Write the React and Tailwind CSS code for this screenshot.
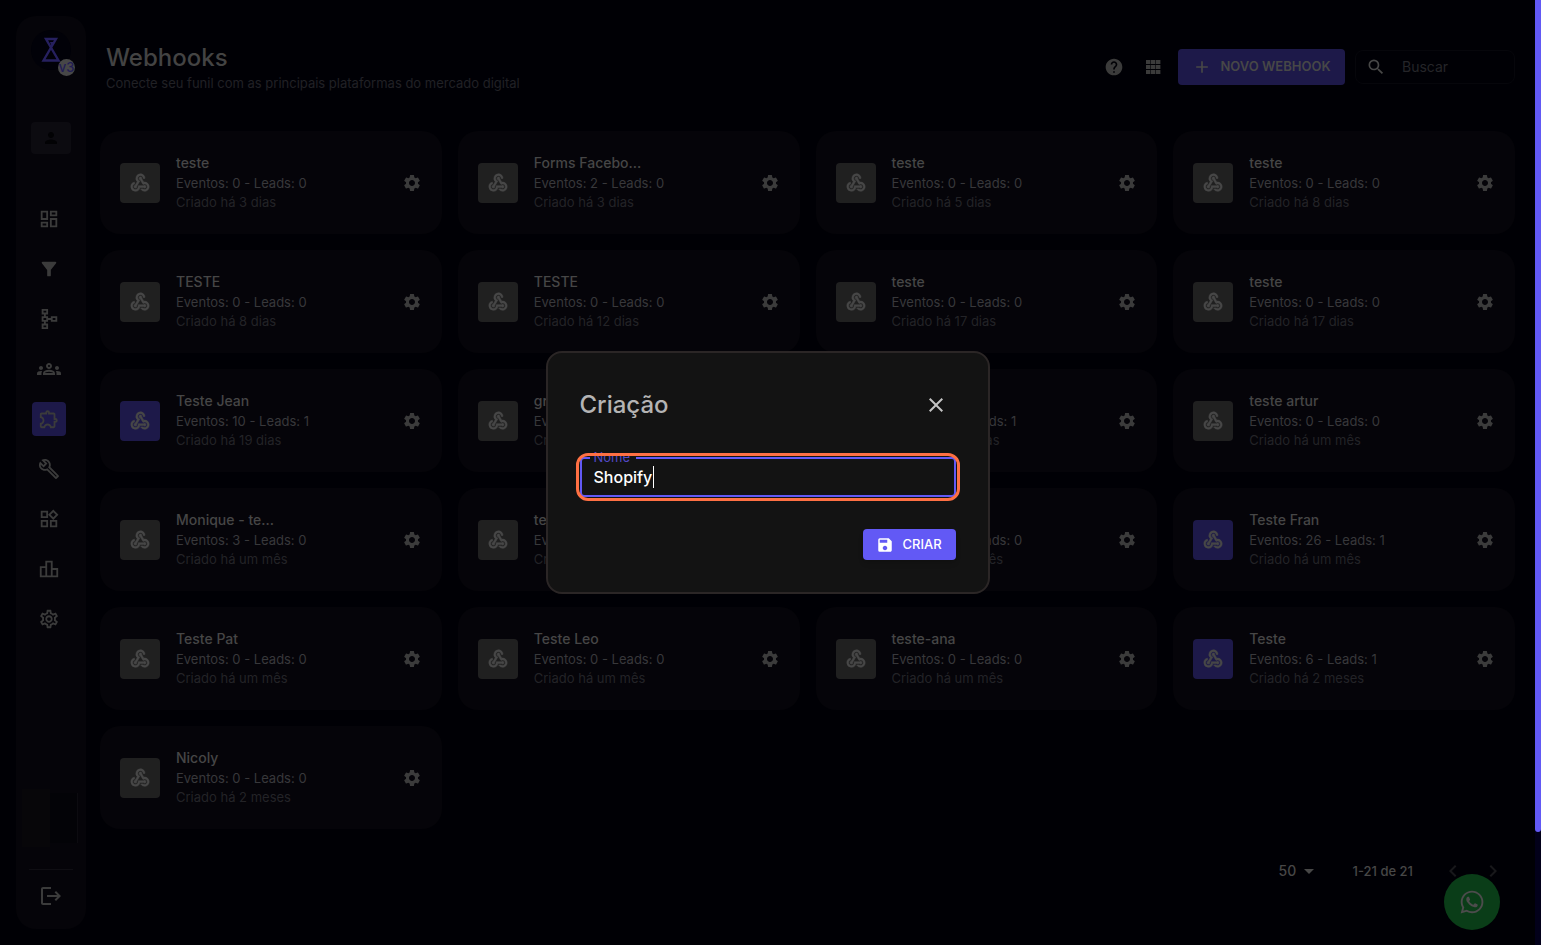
import React, { useState } from "react";
import {
  MdAdd,
  MdArrowDropDown,
  MdChevronLeft,
  MdChevronRight,
  MdClose,
  MdFilterAlt,
  MdHelp,
  MdLogout,
  MdOutlineBuild,
  MdOutlineDashboard,
  MdOutlineExtension,
  MdOutlineGroups,
  MdOutlineLeaderboard,
  MdOutlineSchema,
  MdOutlineSettings,
  MdOutlineWidgets,
  MdPerson,
  MdSave,
  MdSearch,
  MdSettings,
  MdWebhook,
} from "react-icons/md";
import { FaWhatsapp } from "react-icons/fa";

const navItems = [
  { name: "Dashboard", icon: <MdOutlineDashboard size={22} /> },
  { name: "Funis", icon: <MdFilterAlt size={22} /> },
  { name: "Fluxos", icon: <MdOutlineSchema size={22} /> },
  { name: "Leads", icon: <MdOutlineGroups size={24} /> },
  { name: "Webhooks", icon: <MdOutlineExtension size={22} /> },
  { name: "Ferramentas", icon: <MdOutlineBuild size={22} /> },
  { name: "Widgets", icon: <MdOutlineWidgets size={22} /> },
  { name: "Ranking", icon: <MdOutlineLeaderboard size={22} /> },
  { name: "Ajustes", icon: <MdOutlineSettings size={22} /> },
];

const webhooks = [
  { name: "teste", events: 0, leads: 0, created: "3 dias" },
  { name: "Forms Facebo...", events: 2, leads: 0, created: "3 dias" },
  { name: "teste", events: 0, leads: 0, created: "5 dias" },
  { name: "teste", events: 0, leads: 0, created: "8 dias" },
  { name: "TESTE", events: 0, leads: 0, created: "8 dias" },
  { name: "TESTE", events: 0, leads: 0, created: "12 dias" },
  { name: "teste", events: 0, leads: 0, created: "17 dias" },
  { name: "teste", events: 0, leads: 0, created: "17 dias" },
  { name: "Teste Jean", events: 10, leads: 1, created: "19 dias", active: true },
  { name: "grupo", events: 0, leads: 0, created: "20 dias" },
  { name: "teste", events: 1, leads: 1, created: "26 dias" },
  { name: "teste artur", events: 0, leads: 0, created: "um mês" },
  { name: "Monique - te...", events: 3, leads: 0, created: "um mês" },
  { name: "teste", events: 0, leads: 0, created: "um mês" },
  { name: "teste", events: 0, leads: 0, created: "um mês" },
  { name: "Teste Fran", events: 26, leads: 1, created: "um mês", active: true },
  { name: "Teste Pat", events: 0, leads: 0, created: "um mês" },
  { name: "Teste Leo", events: 0, leads: 0, created: "um mês" },
  { name: "teste-ana", events: 0, leads: 0, created: "um mês" },
  { name: "Teste", events: 6, leads: 1, created: "2 meses", active: true },
  { name: "Nicoly", events: 0, leads: 0, created: "2 meses" },
];

const Logo = () => (
  <svg width="20" height="26" viewBox="0 0 20 26" fill="none" stroke="#26205f">
    <path d="M5 2h10L2.5 23.5h15L5 2z" strokeWidth="2.4" />
    <path d="M9 5h3.5L10.5 9z" fill="#26205f" stroke="none" />
  </svg>
);

const GridIcon = () => (
  <svg width="16" height="14" viewBox="0 0 16 14" fill="#3b3b3b">
    {[0, 5, 10].map((y) =>
      [0, 5, 10].map((x) => (
        <rect key={`${x}-${y}`} x={x} y={y} width="4.4" height="4" />
      ))
    )}
  </svg>
);

const Sidebar = () => (
  <aside className="my-4 ml-4 w-[70px] shrink-0 rounded-[20px] bg-[#050409] flex flex-col">
    <div className="relative mx-auto mt-[14px] w-10 h-10 rounded-full bg-[#010108] flex items-center justify-center">
      <Logo />
      <span className="absolute -right-1 -bottom-1.5 w-[17px] h-[17px] rounded-full bg-[#474747] text-[#211c55] text-[13px] leading-none font-medium flex items-center justify-center">
        v3
      </span>
    </div>
    <button
      aria-label="Perfil"
      className="mx-auto mt-[52px] w-10 h-8 rounded bg-[#0c0b10] text-[#020204] flex items-center justify-center"
    >
      <MdPerson size={18} />
    </button>
    <nav className="mt-12 pl-4 flex flex-col gap-4 text-[#3b3b3b]">
      {navItems.map((item) => (
        <a
          key={item.name}
          href="#"
          aria-label={item.name}
          className={`w-[34px] h-[34px] rounded flex items-center justify-center ${
            item.name === "Webhooks" ? "bg-[#1d1949]" : ""
          }`}
        >
          {item.icon}
        </a>
      ))}
    </nav>
    <div className="mt-auto mx-1.5 h-[58px] flex items-center">
      <div className="w-7 h-full bg-[#070609]" />
      <div className="grow mr-0.5 h-[50px] bg-[#030307] border-r border-[#0c0b10]" />
    </div>
    <div className="mx-[13px] mt-[22px] border-t border-[#0f0e13]" />
    <button
      aria-label="Sair"
      className="mx-auto mt-3 mb-[19px] w-7 h-7 text-[#3b3b3b] flex items-center justify-center"
    >
      <MdLogout size={24} />
    </button>
  </aside>
);

const Header = () => (
  <header className="flex items-start justify-between pl-1.5">
    <div>
      <h1 className="text-2xl leading-8 font-medium text-[#434343]">Webhooks</h1>
      <p className="text-[13px] leading-[18px] text-[#212125]">
        Conecte seu funil com as principais plataformas do mercado digital
      </p>
    </div>
    <div className="mt-[7px] flex items-center">
      <button aria-label="Ajuda" className="w-10 h-9 flex items-center justify-center text-[#3b3b3b]">
        <MdHelp size={20} />
      </button>
      <button aria-label="Grade" className="w-10 h-9 flex items-center justify-center">
        <GridIcon />
      </button>
      <button className="ml-1 w-[167px] h-9 rounded bg-[#1d1949] text-[#474747] text-[13px] font-semibold flex items-center justify-center gap-2">
        <MdAdd size={20} />
        NOVO WEBHOOK
      </button>
      <label className="ml-2.5 w-40 h-[34px] px-2.5 rounded-lg border border-[#06060b] flex items-center gap-4 text-[#474747]">
        <MdSearch size={20} className="shrink-0" />
        <input
          type="search"
          aria-label="Buscar"
          placeholder="Buscar"
          className="w-full min-w-0 bg-transparent outline-none text-sm placeholder:text-[#252529]"
        />
      </label>
    </div>
  </header>
);

const WebhookCard = ({ item }) => (
  <article className="rounded-[20px] bg-[#050409] px-5 py-[22px] flex items-center">
    <div
      className={`w-10 h-10 shrink-0 rounded flex items-center justify-center text-[#474747] ${
        item.active ? "bg-[#1d1949]" : "bg-[#202020]"
      }`}
    >
      <MdWebhook size={22} strokeWidth="0.6" className="[&>path:first-child]:hidden" />
    </div>
    <div className="ml-4 grow min-w-0">
      <h2 className="text-sm leading-5 font-medium text-[#464646]">{item.name}</h2>
      <p className="text-[13px] leading-5 text-[#38383b]">
        Eventos: {item.events} - Leads: {item.leads}
      </p>
      <p className="text-[13px] leading-[19px] text-[#232327]">Criado há {item.created}</p>
    </div>
    <button aria-label={`Configurar ${item.name}`} className="text-[#3b3b3b]">
      <MdSettings size={20} />
    </button>
  </article>
);

const Pagination = () => (
  <footer className="mt-[30px] pr-2.5 h-6 flex items-center justify-end text-sm font-medium text-[#474747]">
    <label className="relative flex items-center">
      <select
        aria-label="Itens por página"
        defaultValue="50"
        className="appearance-none bg-transparent outline-none pr-5"
      >
        <option>50</option>
      </select>
      <MdArrowDropDown size={24} className="absolute -right-1 pointer-events-none" />
    </label>
    <span className="ml-9 text-[13px]">1-21 de 21</span>
    <div className="ml-7 flex gap-4 text-[#18181b]">
      <button aria-label="Página anterior">
        <MdChevronLeft size={24} />
      </button>
      <button aria-label="Próxima página">
        <MdChevronRight size={24} />
      </button>
    </div>
  </footer>
);

const CreateModal = () => {
  const [name, setName] = useState("Shopify");

  return (
    <div className="absolute inset-0 flex items-center justify-center">
      <div
        role="dialog"
        aria-label="Criação"
        className="w-[444px] rounded-2xl border-2 border-[#2b2626] bg-[#131313] p-8"
      >
        <div className="flex items-center justify-between h-10">
          <h2 className="text-2xl leading-8 font-medium text-[#b4b4b4]">Criação</h2>
          <button aria-label="Fechar" className="mr-2 text-[#c4c4c4]">
            <MdClose size={24} />
          </button>
        </div>
        <div className="relative mt-8 h-10 rounded border-2 border-[#6259f5] flex items-center">
          <label
            htmlFor="name"
            className="absolute left-2 -top-2.5 pl-1 pr-1.5 bg-[#131313] text-[13px] leading-4 text-[#5148c4]"
          >
            Nome
          </label>
          <input
            id="name"
            value={name}
            onChange={(e) => setName(e.target.value)}
            className="w-full px-3 bg-transparent outline-none text-base font-medium text-white"
          />
          <span className="absolute left-[71px] w-px h-[22px] bg-white" />
          <span className="absolute -inset-1.5 rounded-xl border-3 border-[#ff7043] pointer-events-none" />
        </div>
        <div className="mt-8 flex justify-end">
          <button className="w-[93px] h-[31px] rounded bg-[#6259f5] text-white text-[13px] font-medium shadow-md flex items-center justify-center gap-2">
            <MdSave size={18} />
            CRIAR
          </button>
        </div>
      </div>
    </div>
  );
};

const App = () => {
  return (
    <div className="min-h-screen bg-[#000005] font-['Inter',sans-serif] flex">
      <div className="relative grow flex">
        <Sidebar />
        <main className="grow ml-3.5 mr-5 pt-[42px]">
          <Header />
          <section className="mt-[39px] grid grid-cols-4 gap-4">
            {webhooks.map((item, index) => (
              <WebhookCard key={index} item={item} />
            ))}
          </section>
          <Pagination />
        </main>
        <a
          href="#"
          aria-label="WhatsApp"
          className="absolute right-[35px] bottom-[15px] w-14 h-14 rounded-full bg-[#0a3d18] text-[#4c4c4c] flex items-center justify-center"
        >
          <FaWhatsapp size={26} />
        </a>
        <CreateModal />
      </div>
      <div className="w-1.5 bg-[#02001a] flex">
        <div className="w-full h-[88%] rounded-b-full bg-[#6259f5]" />
      </div>
    </div>
  );
};

export default App;
